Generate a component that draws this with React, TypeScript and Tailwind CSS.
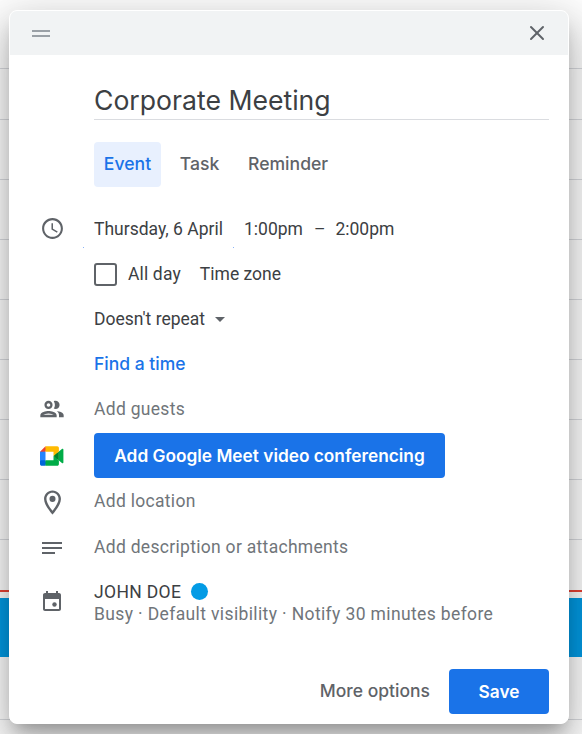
import { X } from 'lucide-react'

const roboto = { fontFamily: 'Roboto, sans-serif' }

function GridRow({ className }: { className: string }) {
  return <div className={`border-b border-[#dadce0] ${className}`} />
}

function Background() {
  return (
    <div className="flex flex-col">
      <GridRow className="h-[69px]" />
      <GridRow className="h-[51px]" />
      <GridRow className="h-[60px]" />
      <GridRow className="h-[60px]" />
      <GridRow className="h-[60px]" />
      <GridRow className="h-[60px]" />
      <GridRow className="h-[60px]" />
      <GridRow className="h-[60px]" />
      <GridRow className="h-[60px]" />
      <div className="h-[50px]" />
      <div className="h-[2px] bg-[#ea4335]" />
      <div className="h-[6px]" />
      <div className="h-[59px] bg-[#039be5]" />
      <GridRow className="h-[63px]" />
    </div>
  )
}

function Row({
  icon,
  className,
  children,
}: {
  icon?: React.ReactNode
  className: string
  children: React.ReactNode
}) {
  return (
    <div className={`flex items-center ${className}`}>
      <div className="flex w-[84px] shrink-0 justify-center">{icon}</div>
      {children}
    </div>
  )
}

function ClockIcon() {
  return (
    <svg className="mb-[3px]" width="25" height="25" viewBox="0 0 24 24" fill="#5f6368">
      <path d="M11.99 2C6.47 2 2 6.48 2 12s4.47 10 9.99 10C17.52 22 22 17.52 22 12S17.52 2 11.99 2zM12 20c-4.42 0-8-3.58-8-8s3.58-8 8-8 8 3.58 8 8-3.58 8-8 8z" />
      <path d="M12.5 7H11v6l5.25 3.15.75-1.23-4.5-2.67z" />
    </svg>
  )
}

function GuestsIcon() {
  return (
    <svg className="mb-[2px]" width="28" height="28" viewBox="0 0 24 24" fill="#5f6368">
      <path d="M9 13.75c-2.34 0-7 1.17-7 3.5V19h14v-1.75c0-2.33-4.66-3.5-7-3.5zM4.34 17c.84-.58 2.87-1.25 4.66-1.25s3.82.67 4.66 1.25H4.34zM9 12c1.93 0 3.5-1.57 3.5-3.5S10.93 5 9 5 5.5 6.57 5.5 8.5 7.07 12 9 12zm0-5c.83 0 1.5.67 1.5 1.5S9.83 10 9 10s-1.5-.67-1.5-1.5S8.17 7 9 7zm7.04 6.81c1.16.84 1.96 1.96 1.96 3.44V19h4v-1.75c0-2.02-3.5-3.17-5.96-3.44zM15 12c1.93 0 3.5-1.57 3.5-3.5S16.93 5 15 5c-.54 0-1.04.13-1.5.35.63.89 1 1.98 1 3.15s-.37 2.26-1 3.15c.46.22.96.35 1.5.35z" />
    </svg>
  )
}

function MeetIcon() {
  return (
    <svg width="24" height="20" viewBox="0 0 24 20">
      <path d="M13.5 10l2.3 2.6 3.1 2V5.4l-3.1 1.9z" fill="#00832d" />
      <path d="M0 14.3V18c0 1 .8 1.8 1.8 1.8h3.7l.8-2.8-.8-2.7-2.6-.8z" fill="#0066da" />
      <path d="M5.5 .2L0 5.7l2.9.8 2.6-.8.8-2.5z" fill="#e94235" />
      <path d="M5.5 5.7H0v8.6h5.5z" fill="#2684fc" />
      <path d="M22.2 2.8L18.9 5.4v9.2l3.3 2.6c.5.4 1.2 0 1.2-.6V3.4c0-.6-.7-1-1.2-.6z" fill="#00ac47" />
      <path d="M13.5 10v4.3H5.5v5.5h11.7c1 0 1.7-.8 1.7-1.8v-3.4z" fill="#00ac47" />
      <path d="M17.2 .2H5.5v5.5h8V10l5.4-4.5V2c0-1-.7-1.8-1.7-1.8z" fill="#ffba00" />
    </svg>
  )
}

function PlaceIcon() {
  return (
    <svg className="mt-[1px]" width="29" height="29" viewBox="0 0 24 24" fill="#5f6368">
      <path d="M12 2C8.13 2 5 5.13 5 9c0 5.25 7 13 7 13s7-7.75 7-13c0-3.87-3.13-7-7-7zM7 9c0-2.76 2.24-5 5-5s5 2.24 5 5c0 2.88-2.88 7.19-5 9.88C9.92 16.21 7 11.85 7 9z" />
      <circle cx="12" cy="9" r="2.5" />
    </svg>
  )
}

function DescriptionIcon() {
  return (
    <svg width="24" height="24" viewBox="0 0 24 24" fill="#5f6368">
      <path d="M2 6h20v2H2zM2 11h20v2H2zM2 16h13v2H2z" />
    </svg>
  )
}

function CalendarIcon() {
  return (
    <svg className="mb-[4px]" width="24" height="24" viewBox="0 0 24 24" fill="#5f6368">
      <path d="M19 4h-1V2h-2v2H8V2H6v2H5c-1.1 0-2 .9-2 2v14c0 1.1.9 2 2 2h14c1.1 0 2-.9 2-2V6c0-1.1-.9-2-2-2zm0 16H5V10h14v10z" />
      <circle cx="14.5" cy="15.5" r="2.2" />
    </svg>
  )
}

export default function App() {
  return (
    <div className="relative h-[734px] w-[582px] overflow-hidden bg-white" style={roboto}>
      <Background />

      <div className="absolute left-[9px] top-[10px] flex h-[714px] w-[560px] flex-col overflow-hidden rounded-[8px] border border-white bg-white shadow-[0_24px_38px_3px_rgba(0,0,0,0.17),0_9px_46px_8px_rgba(0,0,0,0.15),0_11px_15px_-7px_rgba(0,0,0,0.24)]">
        <div className="flex h-[44px] shrink-0 items-center justify-between bg-[#f1f3f4] pl-[22px] pr-[19px]">
          <div className="flex w-[18px] flex-col gap-[3px]">
            <div className="h-[2px] bg-[#9aa0a6]" />
            <div className="h-[2px] bg-[#9aa0a6]" />
          </div>
          <X className="h-[24px] w-[24px] text-[#5f6368]" strokeWidth={2} />
        </div>

        <div className="ml-[84px] mr-[19px] mt-[24px] h-[41px] border-b border-[#dadce0] text-[26.6px] leading-[42px] text-[#3c4043] [font-family:Inter,sans-serif]">
          Corporate Meeting
        </div>

        <div className="ml-[84px] mt-[22px] flex h-[45px] items-center text-[17.6px] text-[#5f6368] [font-family:Inter,sans-serif]">
          <div className="flex h-full w-[67px] items-center justify-center rounded-[4px] bg-[#e8f0fe] font-medium text-[#1a73e8]">
            Event
          </div>
          <div className="flex h-full w-[77px] items-center justify-center font-medium">Task</div>
          <div className="pl-[10px] font-medium">Reminder</div>
        </div>

        <Row className="relative mt-[20px] h-[45px]" icon={<ClockIcon />}>
          <div className="flex text-[17.5px] text-[#3c4043]">
            <span className="w-[150px]">Thursday, 6 April</span>
            <span>1:00pm</span>
            <span className="ml-[11px] mr-[10px]">–</span>
            <span>2:00pm</span>
          </div>
          <div className="absolute left-[73px] top-[40px] h-[1px] w-[1px] bg-[#8ab4f8]" />
          <div className="absolute left-[223px] top-[40px] h-[1px] w-[1px] bg-[#8ab4f8]" />
        </Row>

        <Row className="h-[45px]">
          <div className="h-[23px] w-[23px] rounded-[3px] border-2 border-[#5f6368]" />
          <span className="ml-[11px] text-[17.5px] tracking-[0.15px] text-[#3c4043]">All day</span>
          <span className="ml-[19px] text-[17.5px] text-[#3c4043]">Time zone</span>
        </Row>

        <Row className="h-[45px]">
          <span className="text-[17.5px] text-[#3c4043]">Doesn't repeat</span>
          <div className="ml-[10px] h-0 w-0 border-x-[5px] border-t-[5px] border-x-transparent border-t-[#5f6368]" />
        </Row>

        <Row className="h-[45px]">
          <span className="text-[17.5px] font-medium text-[#1a73e8] [font-family:Inter,sans-serif]">Find a time</span>
        </Row>

        <Row className="h-[45px]" icon={<GuestsIcon />}>
          <span className="text-[17.5px] tracking-[0.3px] text-[#70757a]">Add guests</span>
        </Row>

        <Row className="mt-[1px] h-[45px]" icon={<MeetIcon />}>
          <div className="flex h-[45px] w-[351px] items-center justify-center rounded-[4px] bg-[#1a73e8] text-[17.3px] font-semibold text-white [font-family:Inter,sans-serif]">
            Add Google Meet video conferencing
          </div>
        </Row>

        <Row className="h-[47px]" icon={<PlaceIcon />}>
          <span className="text-[17.5px] tracking-[0.3px] text-[#70757a]">Add location</span>
        </Row>

        <Row className="h-[45px]" icon={<DescriptionIcon />}>
          <span className="text-[17.5px] tracking-[0.3px] text-[#70757a]">Add description or attachments</span>
        </Row>

        <Row className="mt-[10px] h-[45px]" icon={<CalendarIcon />}>
          <div className="flex flex-col">
            <div className="flex items-center text-[17.5px] leading-[22px] tracking-[0.35px] text-[#3c4043]">
              JOHN DOE
              <div className="ml-[10px] h-[17px] w-[17px] rounded-full bg-[#039be5]" />
            </div>
            <div className="text-[17.5px] leading-[22px] tracking-[0.37px] text-[#70757a]">
              Busy · Default visibility · Notify 30 minutes before
            </div>
          </div>
        </Row>

        <div className="mr-[19px] mt-auto mb-[9px] flex items-center justify-end [font-family:Inter,sans-serif]">
          <span className="mr-[19px] text-[17.5px] font-medium text-[#5f6368]">More options</span>
          <div className="flex h-[45px] w-[100px] items-center justify-center rounded-[4px] bg-[#1a73e8] text-[17.3px] font-semibold text-white">
            Save
          </div>
        </div>
      </div>
    </div>
  )
}
